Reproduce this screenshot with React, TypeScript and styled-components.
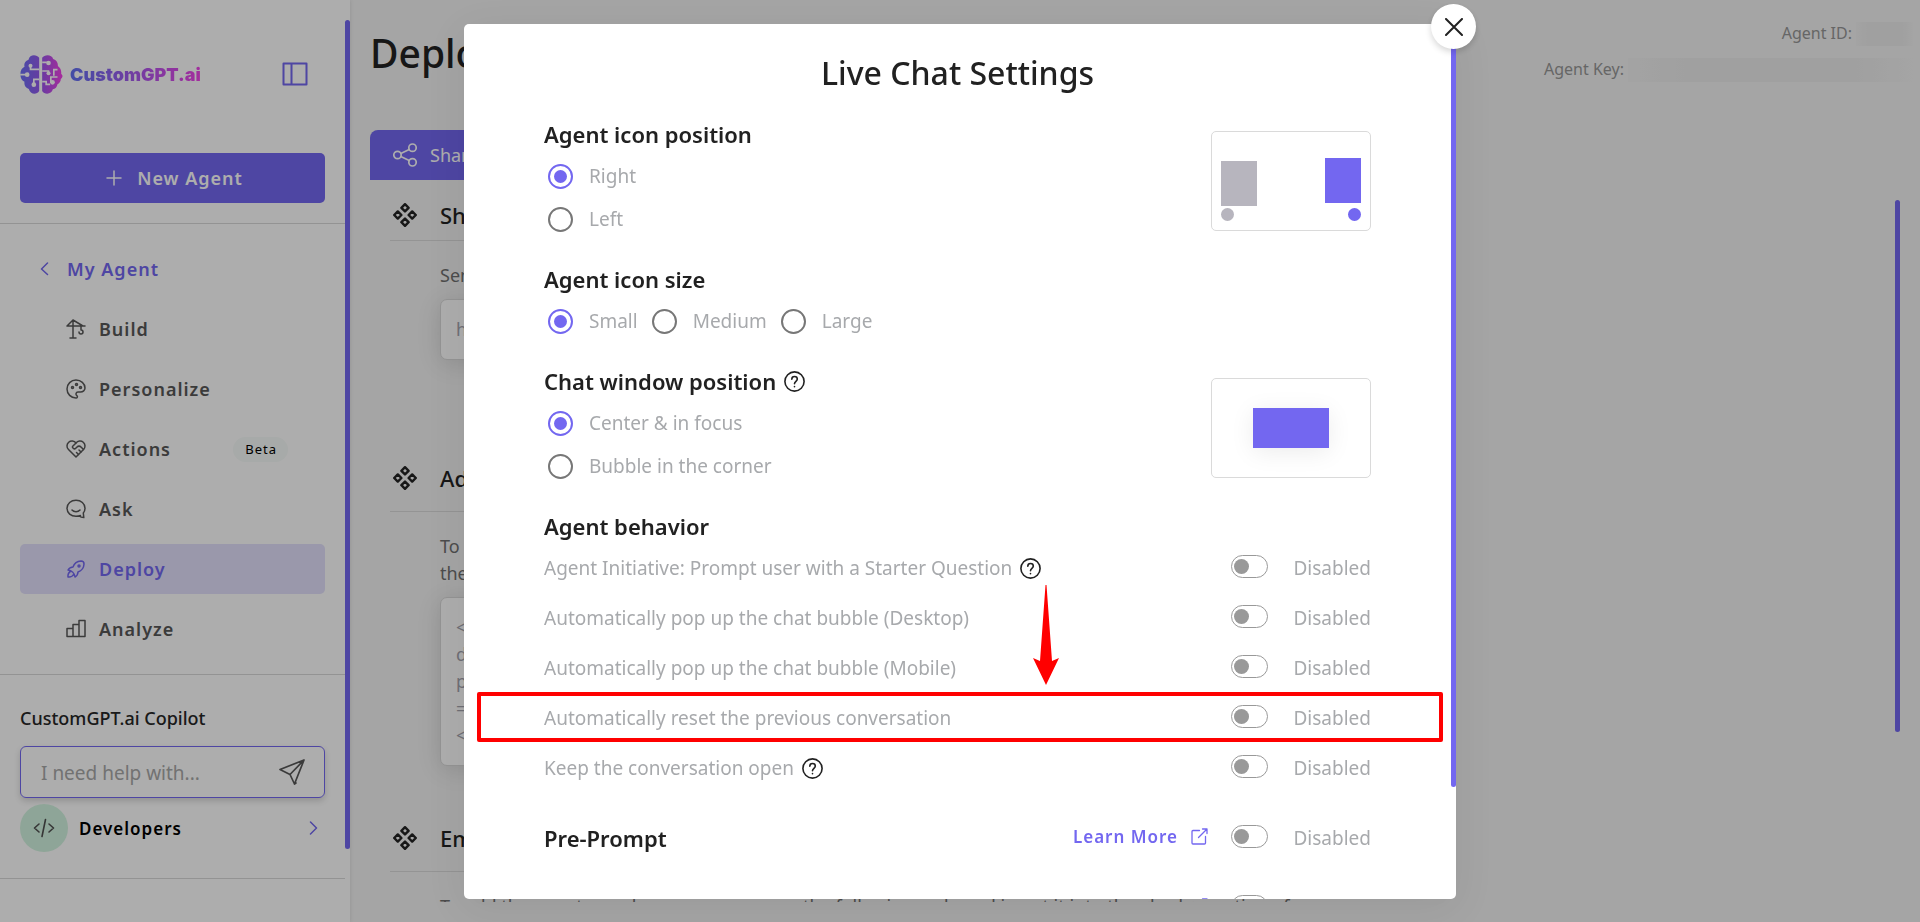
import React, { useState } from "react";
import styled, { createGlobalStyle, css } from "styled-components";

const accent = "#7367f0";

const GlobalStyle = createGlobalStyle`
  *, *::before, *::after { box-sizing: border-box; }
  body {
    margin: 0;
    overflow: hidden;
    background: #f3f3f3;
    color: #212121;
    font-family: "Noto Sans", "Open Sans", sans-serif;
    font-size: 18px;
    line-height: 27px;
  }
  button, input { font: inherit; }
  h1, h2, h3, p { margin: 0; }
`;

/* ---------- shared pieces ---------- */

const Page = styled.div`
  display: flex;
  height: 100vh;
`;

const Icon = styled.svg<{ $size?: number; $weight?: number }>`
  flex: none;
  display: block;
  width: ${(p) => p.$size ?? 24}px;
  height: ${(p) => p.$size ?? 24}px;
  fill: none;
  stroke: currentColor;
  stroke-width: ${(p) => p.$weight ?? 1.5};
  stroke-linecap: round;
  stroke-linejoin: round;
`;

const Track = styled.div`
  flex: none;
  width: 5px;
  padding: 20px 0;
`;

const Thumb = styled.div<{ $length: number }>`
  height: ${(p) => p.$length}%;
  border-radius: 3px;
  background: ${accent};
`;

/* ---------- sidebar ---------- */

const Sidebar = styled.aside`
  flex: none;
  display: flex;
  width: 350px;
  background: #fff;
  box-shadow: 0 0 4px rgba(0, 0, 0, 0.12);
`;

const SidebarBody = styled.div`
  flex: 1;
  min-width: 0;
  overflow: hidden;
`;

const SidebarBlock = styled.div`
  display: flex;
  flex-direction: column;
  padding: 20px;
  border-bottom: 1px solid #d9d9d9;
`;

const Brand = styled.div`
  display: flex;
  align-items: center;
  justify-content: space-between;
  height: 108px;
  margin-bottom: 25px;
  padding-right: 17px;
`;

const BrandLink = styled.a`
  display: flex;
  align-items: center;
  gap: 7px;
  text-decoration: none;
`;

const BrandName = styled.span`
  background: linear-gradient(90deg, #6272f4, #f043e8);
  background-clip: text;
  -webkit-background-clip: text;
  color: transparent;
  font-family: Inter, "Liberation Sans", sans-serif;
  font-size: 18px;
  font-weight: 900;
`;

const IconButton = styled.button`
  display: flex;
  padding: 0;
  border: 0;
  background: none;
  color: ${accent};
  cursor: pointer;
`;

const NewAgent = styled.button`
  display: flex;
  align-items: center;
  justify-content: center;
  gap: 15px;
  height: 50px;
  padding: 0 2px 0 6px;
  border: 0;
  border-radius: 5px;
  background: ${accent};
  color: #fff;
  font-weight: 600;
  letter-spacing: 1px;
  cursor: pointer;
`;

const Nav = styled.nav`
  display: flex;
  flex-direction: column;
  gap: 10px;
`;

const navText = css`
  display: flex;
  align-items: center;
  height: 50px;
  border-radius: 5px;
  font-weight: 600;
  letter-spacing: 1px;
  text-decoration: none;
`;

const NavBack = styled.a`
  ${navText}
  gap: 15px;
  padding-left: 18px;
  color: ${accent};
`;

const NavItem = styled.a<{ $active?: boolean }>`
  ${navText}
  gap: 13px;
  padding: 0 37px 0 46px;
  background: ${(p) => (p.$active ? "#e3e1fc" : "transparent")};
  color: ${(p) => (p.$active ? accent : "#585858")};
`;

const Badge = styled.span`
  margin-left: auto;
  padding: 0 11px 0 12px;
  border-radius: 13px;
  background: #f7fbf9;
  color: #000;
  font-size: 13px;
  font-weight: 400;
  line-height: 25px;
`;

const CopilotLabel = styled.label`
  margin-top: 10px;
  margin-bottom: 14px;
  color: #272727;
  font-weight: 500;
`;

const CopilotBox = styled.div`
  display: flex;
  align-items: center;
  height: 52px;
  padding: 0 19px 0 20px;
  border: 1px solid ${accent};
  border-radius: 6px;
  box-shadow: 0 3px 6px rgba(0, 0, 0, 0.16);
`;

const CopilotInput = styled.input`
  flex: 1;
  min-width: 0;
  padding: 2px 0 0;
  border: 0;
  outline: 0;
  background: none;
  font-size: 19px;
  &::placeholder { color: #a8a8a8; opacity: 1; }
`;

const SendButton = styled(IconButton)`
  color: #585858;
`;

const Developers = styled.a`
  display: flex;
  align-items: center;
  gap: 11px;
  margin-top: 6px;
  margin-bottom: 6px;
  padding-right: 5px;
  color: #000;
  font-size: 17px;
  font-weight: 600;
  letter-spacing: 1px;
  text-decoration: none;
`;

const DevBadge = styled.span`
  display: flex;
  align-items: center;
  justify-content: center;
  width: 48px;
  height: 48px;
  border-radius: 50%;
  background: #d2f4e0;
  color: #505050;
`;

const Push = styled.span`
  margin-left: auto;
  color: ${accent};
`;

/* ---------- deploy page ---------- */

const Main = styled.main`
  flex: 1;
  min-width: 0;
  display: flex;
  flex-direction: column;
  padding: 0 20px;
`;

const MainHeader = styled.header`
  display: flex;
  justify-content: space-between;
  height: 130px;
`;

const PageTitle = styled.h1`
  padding-top: 25px;
  color: #222;
  font-size: 39px;
  font-weight: 500;
  line-height: 56px;
`;

const Credentials = styled.dl`
  display: flex;
  flex-direction: column;
  align-items: flex-end;
  gap: 11px;
  margin: 21px -14px 0 0;
`;

const Credential = styled.div`
  display: flex;
  align-items: center;
  gap: 4px;
  color: #979797;
  font-size: 16px;
  line-height: 25px;
`;

const Redacted = styled.dd<{ $width: number }>`
  width: ${(p) => p.$width}px;
  height: 24px;
  margin: 0;
  background: linear-gradient(90deg, #f1f1f1, #ececec 20%, #ececec 80%, #f3f3f3);
`;

const Tabs = styled.div`
  display: flex;
  width: 70%;
`;

const Tab = styled.button`
  flex: 1;
  display: flex;
  align-items: center;
  gap: 13px;
  height: 50px;
  padding: 0 23px;
  border: 0;
  border-radius: 8px 8px 0 0;
  background: ${accent};
  color: #fff;
  text-align: left;
`;

const Scroller = styled.div`
  flex: 1;
  min-height: 0;
  display: flex;
  justify-content: space-between;
  margin-bottom: 20px;
`;

const Sections = styled.div`
  width: 70%;
  padding: 10px 20px 0;
  overflow: hidden;
`;

const Section = styled.section<{ $height: number }>`
  min-height: ${(p) => p.$height}px;
`;

const SectionHead = styled.div<{ $loose?: boolean }>`
  display: flex;
  align-items: center;
  gap: 23px;
  height: 51px;
  padding: 0 0 ${(p) => (p.$loose ? 16 : 0)}px 3px;
  border-bottom: 1px solid #dadada;
  color: #222;
`;

const SectionTitle = styled.h2`
  font-size: 22px;
  font-weight: 500;
  line-height: 30px;
`;

const SectionText = styled.p`
  margin: 21px 0 10px 50px;
  color: #707070;
`;

const CodeBox = styled.div`
  margin-left: 50px;
  padding: 16px 15px;
  border: 1px solid #dadada;
  border-radius: 7px;
  background: #fff;
  box-shadow: 0 4px 24px rgba(0, 0, 0, 0.12);
  color: #a4a4ae;
`;

/* ---------- dialog ---------- */

const Backdrop = styled.div`
  position: fixed;
  inset: 0;
  display: flex;
  justify-content: center;
  padding: 24px 0 23px;
  background: rgba(0, 0, 0, 0.32);
`;

const Dialog = styled.div`
  position: relative;
  display: flex;
  width: 992px;
  max-width: calc(100% - 64px);
  border-radius: 5px;
  background: #fff;
  box-shadow: 0 11px 15px -7px rgba(0, 0, 0, 0.02), 0 9px 46px 8px rgba(0, 0, 0, 0.06);
`;

const CloseButton = styled.button`
  position: absolute;
  top: -20px;
  right: -20px;
  display: flex;
  align-items: center;
  justify-content: center;
  width: 45px;
  height: 45px;
  padding: 0;
  border: 0;
  border-radius: 50%;
  background: #fff;
  box-shadow: 0 3px 6px rgba(0, 0, 0, 0.16);
  color: #212121;
  cursor: pointer;
`;

const DialogBody = styled.div`
  flex: 1;
  min-width: 0;
  padding: 25px 80px 0;
  overflow: hidden;
`;

const DialogTitle = styled.h2`
  margin-bottom: 24px;
  font-size: 32px;
  font-weight: 500;
  line-height: 48px;
  text-align: center;
`;

const Group = styled.fieldset`
  display: flex;
  align-items: flex-start;
  justify-content: space-between;
  min-width: 0;
  margin: 0 0 25px;
  padding: 0;
  border: 0;
`;

const GroupTitle = styled.h3`
  display: flex;
  align-items: center;
  gap: 8px;
  margin-bottom: 8px;
  font-size: 22px;
  font-weight: 600;
  line-height: 26px;
`;

const Choices = styled.div<{ $inline?: boolean }>`
  display: flex;
  flex-direction: ${(p) => (p.$inline ? "row" : "column")};
  column-gap: 14px;
  padding-left: 4px;
`;

const Choice = styled.label`
  display: flex;
  align-items: center;
  gap: 16px;
  height: 43px;
  color: #a7a9ac;
  font-size: 19px;
  cursor: pointer;
`;

const Radio = styled.input.attrs({ type: "radio" })`
  appearance: none;
  flex: none;
  display: grid;
  place-items: center;
  width: 25px;
  height: 25px;
  margin: 0;
  border: 2px solid #777;
  border-radius: 50%;
  &:checked { border-color: ${accent}; }
  &:checked::before {
    content: "";
    width: 13px;
    height: 13px;
    border-radius: 50%;
    background: ${accent};
  }
`;

const Preview = styled.div`
  flex: none;
  display: flex;
  width: 160px;
  height: 100px;
  margin-top: 10px;
  padding: 9px;
  border: 1px solid #dadada;
  border-radius: 5px;
`;

const PositionPreview = styled(Preview)`
  align-items: flex-end;
  justify-content: space-between;
`;

const FocusPreview = styled(Preview)`
  align-items: center;
  justify-content: center;
`;

const MiniChat = styled.span<{ $color: string; $end?: boolean }>`
  display: flex;
  flex-direction: column;
  align-items: ${(p) => (p.$end ? "flex-end" : "flex-start")};
  gap: ${(p) => (p.$end ? 5 : 2)}px;
  &::before {
    content: "";
    width: 36px;
    height: 45px;
    background: ${(p) => p.$color};
  }
  &::after {
    content: "";
    width: 13px;
    height: 13px;
    border-radius: 50%;
    background: ${(p) => p.$color};
  }
`;

const MiniWindow = styled.span`
  width: 76px;
  height: 40px;
  background: ${accent};
  box-shadow: 0 4px 24px rgba(0, 0, 0, 0.08);
`;

const Settings = styled.div`
  display: flex;
  flex-direction: column;
  gap: 26px;
  margin-top: 15px;
`;

const Setting = styled.div<{ $spaced?: boolean }>`
  position: relative;
  display: flex;
  align-items: center;
  height: 24px;
  margin-top: ${(p) => (p.$spaced ? 20 : 0)}px;
  color: #a7a9ac;
  font-size: 19px;
`;

const SettingName = styled.span`
  display: flex;
  align-items: center;
  gap: 8px;
  padding-top: 4px;
`;

const SettingTitle = styled.h3`
  padding-top: 4px;
  color: #212121;
  font-size: 22px;
  font-weight: 600;
`;

const Actions = styled.div`
  display: flex;
  align-items: center;
  gap: 23px;
  margin-left: auto;
`;

const LearnMore = styled.a`
  display: flex;
  align-items: center;
  gap: 13px;
  color: ${accent};
  font-size: 17px;
  font-weight: 600;
  letter-spacing: 1px;
  text-decoration: none;
`;

const SwitchLabel = styled.label`
  display: flex;
  align-items: center;
  justify-content: space-between;
  width: 140px;
  cursor: pointer;
`;

const SwitchState = styled.span`
  padding-top: 4px;
`;

const Switch = styled.input.attrs({ type: "checkbox" })`
  appearance: none;
  flex: none;
  display: flex;
  align-items: center;
  width: 37px;
  height: 23px;
  margin: 0;
  padding: 0 2px;
  border: 1px solid #999;
  border-radius: 12px;
  &::before {
    content: "";
    width: 15px;
    height: 15px;
    border-radius: 50%;
    background: #999;
  }
  &:checked { justify-content: flex-end; border-color: ${accent}; }
  &:checked::before { background: ${accent}; }
`;

const HelpMark = styled(Icon)`
  color: #212121;
`;

/* Red call-out drawn over one of the rows. */
const Callout = styled.span`
  position: absolute;
  inset: -12px -72px -14px -67px;
  border: 4px solid #f00;
  border-radius: 2px;
  pointer-events: none;
`;

const CalloutArrow = styled.svg`
  position: absolute;
  left: 489px;
  bottom: 43px;
  width: 26px;
  height: 100px;
  fill: #f00;
`;

/* ---------- drawings ---------- */

const BrainLogo = () => (
  <svg width="43" height="39" viewBox="0 0 128 117" aria-hidden="true">
    <defs>
      <linearGradient id="brain" gradientUnits="userSpaceOnUse" x1="0" y1="0" x2="128" y2="0">
        <stop offset="0" stopColor="#6a70f6" />
        <stop offset="0.5" stopColor="#9a58ee" />
        <stop offset="1" stopColor="#f83fe6" />
      </linearGradient>
    </defs>
    <path
      fill="url(#brain)"
      d="M57 8C50-2 28-3 25 14C14 18 11 26 13 35C4 40 0 48 1 58C0 68 5 76 13 80C11 90 16 99 26 102C30 119 50 120 57 108ZM66 8C73-2 95-3 99 12C110 16 114 24 113 33C122 40 124 48 123 56C129 61 128 67 122 72C122 80 117 85 112 88C111 96 105 102 98 103C94 119 73 120 66 108Z"
    />
    <g stroke="#fff" strokeWidth="5" fill="none">
      <path d="M31 32V43H57M0 59H18M57 73H41V87M66 22H80M66 48H85V52M112 44H101V62M66 80H78V88H90M92 83V66H112" />
    </g>
    <g fill="#fff">
      <circle cx="31" cy="32" r="6" />
      <circle cx="21" cy="59" r="7" />
      <circle cx="41" cy="89" r="7" />
      <circle cx="85" cy="24" r="7" />
      <circle cx="85" cy="55" r="6" />
      <circle cx="97" cy="82" r="7" />
    </g>
  </svg>
);

const PanelIcon = () => (
  <Icon $size={26} $weight={2} viewBox="0 0 26 26">
    <path d="M1.5 2.500H24.500V23.500H1.500ZM9.500 2.500V23.500" />
  </Icon>
);

const CraneIcon = () => (
  <Icon $size={20} viewBox="2 2 20 20">
    <path d="M6 21h6M9 21V3L3 9h18M9 3l10 6M17 9v4a2 2 0 1 1-2 2" />
  </Icon>
);

const PaletteIcon = () => (
  <Icon $size={20} viewBox="2 2 20 20">
    <path d="M12 21a9 9 0 0 1 0-18c4.970 0 9 3.582 9 8c0 1.060-.474 2.078-1.318 2.828c-.844.750-1.989 1.172-3.182 1.172h-2.500a2 2 0 0 0-1 3.750a1.300 1.300 0 0 1-1 2.250" />
    <circle cx="8.500" cy="10.500" r="1" />
    <circle cx="12.500" cy="7.500" r="1" />
    <circle cx="16.500" cy="10.500" r="1" />
  </Icon>
);

const HandshakeIcon = () => (
  <Icon $size={20} viewBox="2 2 20 20">
    <path d="M19.500 12.572L12 20l-7.500-7.428A5 5 0 1 1 12 6.006a5 5 0 1 1 7.500 6.572" />
    <path d="M12 6L8.707 9.293a1 1 0 0 0 0 1.414l.543.543c.690.690 1.810.690 2.500 0l1-1a3.182 3.182 0 0 1 4.500 0l2.250 2.250M12.500 15.500l2 2M15 13l2 2" />
  </Icon>
);

const AskIcon = () => (
  <Icon $size={20} viewBox="0 0 20 20">
    <path d="M14.500 16.500C13.200 17.100 11.700 17.300 10 17.300C5 17.300 1 14 1 9.300S5 1.200 10 1.200S19 4.600 19 9.300C19 11.300 18.400 12.800 17.300 14L17.800 18.600C16 18.600 14.500 18.200 13.200 17M6 11C8 13.300 12 13.300 14 11" />
  </Icon>
);

const RocketIcon = () => (
  <Icon $size={20} viewBox="2 2 20 20">
    <path d="M4 13a8 8 0 0 1 7 7a6 6 0 0 0 3-5a9 9 0 0 0 6-8a3 3 0 0 0-3-3a9 9 0 0 0-8 6a6 6 0 0 0-5 3M7 14a6 6 0 0 0-3 6a6 6 0 0 0 6-3" />
    <circle cx="15" cy="9" r="1" />
  </Icon>
);

const BarsIcon = () => (
  <Icon $size={20} viewBox="0 0 20 20">
    <path d="M1 17.500V9.500H7V17.500ZM7 17.500V5.500H13V17.500M13 5.500V1.500H19V17.500H7" />
  </Icon>
);

const Chevron = ({ left }: { left?: boolean }) => (
  <Icon $size={14} viewBox="0 0 14 14">
    <path d={left ? "M9.500 1L3.500 7L9.500 12.500" : "M4.500 1L10.500 7L4.500 13"} />
  </Icon>
);

const SendIcon = () => (
  <Icon $size={26} $weight={1.7} viewBox="0 0 26 26">
    <path d="M25 1L1 10.500L11 15.500L15.500 25ZM11 15.500L25 1M15.500 25L17 24" />
  </Icon>
);

const CodeIcon = () => (
  <Icon $size={22} $weight={1.6} viewBox="0 0 22 22">
    <path d="M6 7L1.500 11L6 15M16 7L20.500 11L16 15M12.500 2.500L9 19.500" />
  </Icon>
);

const ShareIcon = () => (
  <Icon $size={24} $weight={1.7} viewBox="0 0 24 24">
    <circle cx="4.500" cy="12" r="3.700" />
    <circle cx="19.500" cy="4.700" r="3.700" />
    <circle cx="19.500" cy="19.300" r="3.700" />
    <path d="M7.800 10.400L16.200 6.400M7.800 13.600L16.200 17.600" />
  </Icon>
);

const ComponentsIcon = () => (
  <Icon $size={24} $weight={2} viewBox="2 2 20 20">
    <path d="M3 12l3 3l3-3l-3-3zM15 12l3 3l3-3l-3-3zM9 6l3 3l3-3l-3-3zM9 18l3 3l3-3l-3-3z" />
  </Icon>
);

const HelpIcon = () => (
  <HelpMark $size={21} $weight={1.6} viewBox="0 0 21 21" role="img" aria-label="Help">
    <circle cx="10.500" cy="10.500" r="9.600" />
    <path d="M7.800 8.200C7.800 4.600 13.300 4.700 13.300 8.100C13.300 10.200 10.500 10.400 10.500 12.700M10.500 15.600V15.700" />
  </HelpMark>
);

const ExternalIcon = () => (
  <Icon $size={17} $weight={1.3} viewBox="0 0 17 17">
    <path d="M8.500 2.500H2C1.300 2.500 1 2.800 1 3.500V15C1 15.700 1.300 16 2 16H13.500C14.200 16 14.500 15.700 14.500 15V8.500M11.500 1H16V5.500M16 1L7.500 9.500" />
  </Icon>
);

/* ---------- app ---------- */

const navItems = [
  { label: "Build", icon: <CraneIcon /> },
  { label: "Personalize", icon: <PaletteIcon /> },
  { label: "Actions", icon: <HandshakeIcon />, badge: "Beta" },
  { label: "Ask", icon: <AskIcon /> },
  { label: "Deploy", icon: <RocketIcon />, active: true },
  { label: "Analyze", icon: <BarsIcon /> },
];

const behaviors = [
  { label: "Agent Initiative: Prompt user with a Starter Question", help: true },
  { label: "Automatically pop up the chat bubble (Desktop)" },
  { label: "Automatically pop up the chat bubble (Mobile)" },
  { label: "Automatically reset the previous conversation", marked: true },
  { label: "Keep the conversation open", help: true },
];

function RadioSet({ name, options, inline }: { name: string; options: string[]; inline?: boolean }) {
  const [value, setValue] = useState(options[0]);
  return (
    <Choices $inline={inline}>
      {options.map((option) => (
        <Choice key={option}>
          <Radio name={name} checked={value === option} onChange={() => setValue(option)} />
          {option}
        </Choice>
      ))}
    </Choices>
  );
}

function Toggle({ name, bare }: { name: string; bare?: boolean }) {
  const [on, setOn] = useState(false);
  return (
    <SwitchLabel>
      <Switch aria-label={name} checked={on} onChange={() => setOn(!on)} />
      {!bare && <SwitchState>{on ? "Enabled" : "Disabled"}</SwitchState>}
    </SwitchLabel>
  );
}

export default function App() {
  return (
    <>
      <GlobalStyle />
      <Page>
        <Sidebar>
          <SidebarBody>
            <SidebarBlock>
              <Brand>
                <BrandLink href="#home">
                  <BrainLogo />
                  <BrandName>CustomGPT.ai</BrandName>
                </BrandLink>
                <IconButton aria-label="Collapse sidebar">
                  <PanelIcon />
                </IconButton>
              </Brand>
              <NewAgent>
                <Icon $size={16} viewBox="0 0 16 16">
                  <path d="M8 1V15M1 8H15" />
                </Icon>
                New Agent
              </NewAgent>
            </SidebarBlock>
            <SidebarBlock>
              <Nav>
                <NavBack href="#agents">
                  <Chevron left />
                  My Agent
                </NavBack>
                {navItems.map((item) => (
                  <NavItem key={item.label} href={`#${item.label.toLowerCase()}`} $active={item.active}>
                    {item.icon}
                    {item.label}
                    {item.badge && <Badge>{item.badge}</Badge>}
                  </NavItem>
                ))}
              </Nav>
            </SidebarBlock>
            <SidebarBlock>
              <CopilotLabel htmlFor="copilot">CustomGPT.ai Copilot</CopilotLabel>
              <CopilotBox>
                <CopilotInput id="copilot" placeholder="I need help with..." />
                <SendButton aria-label="Send">
                  <SendIcon />
                </SendButton>
              </CopilotBox>
              <Developers href="#developers">
                <DevBadge>
                  <CodeIcon />
                </DevBadge>
                Developers
                <Push>
                  <Chevron />
                </Push>
              </Developers>
            </SidebarBlock>
          </SidebarBody>
          <Track>
            <Thumb $length={94} />
          </Track>
        </Sidebar>

        <Main>
          <MainHeader>
            <PageTitle>Deploy</PageTitle>
            <Credentials>
              <Credential>
                <dt>Agent ID:</dt>
                <Redacted $width={58} />
              </Credential>
              <Credential>
                <dt>Agent Key:</dt>
                <Redacted $width={286} />
              </Credential>
            </Credentials>
          </MainHeader>
          <Tabs>
            <Tab>
              <ShareIcon />
              Share
            </Tab>
          </Tabs>
          <Scroller>
            <Sections>
              <Section $height={271}>
                <SectionHead>
                  <ComponentsIcon />
                  <SectionTitle>Share</SectionTitle>
                </SectionHead>
                <SectionText>Send</SectionText>
                <CodeBox>https</CodeBox>
              </Section>
              <Section $height={360}>
                <SectionHead $loose>
                  <ComponentsIcon />
                  <SectionTitle>Add</SectionTitle>
                </SectionHead>
                <SectionText>
                  To
                  <br />
                  the
                </SectionText>
                <CodeBox>
                  &lt;
                  <br />
                  d
                  <br />
                  p
                  <br />
                  =
                  <br />
                  &lt;
                </CodeBox>
              </Section>
              <Section $height={200}>
                <SectionHead $loose>
                  <ComponentsIcon />
                  <SectionTitle>Embed</SectionTitle>
                </SectionHead>
                <SectionText>
                  To add the agent anywhere on a page, use the following code and insert it into the &lt;body&gt; section of
                </SectionText>
              </Section>
            </Sections>
            <Track>
              <Thumb $length={78} />
            </Track>
          </Scroller>
        </Main>
      </Page>

      <Backdrop>
        <Dialog role="dialog" aria-modal="true" aria-labelledby="dialog-title">
          <DialogBody>
            <DialogTitle id="dialog-title">Live Chat Settings</DialogTitle>
            <Group>
              <div>
                <GroupTitle>Agent icon position</GroupTitle>
                <RadioSet name="icon-position" options={["Right", "Left"]} />
              </div>
              <PositionPreview>
                <MiniChat $color="#b7b5be" />
                <MiniChat $color={accent} $end />
              </PositionPreview>
            </Group>
            <Group>
              <div>
                <GroupTitle>Agent icon size</GroupTitle>
                <RadioSet name="icon-size" options={["Small", "Medium", "Large"]} inline />
              </div>
            </Group>
            <Group>
              <div>
                <GroupTitle>
                  Chat window position
                  <HelpIcon />
                </GroupTitle>
                <RadioSet name="window-position" options={["Center & in focus", "Bubble in the corner"]} />
              </div>
              <FocusPreview>
                <MiniWindow />
              </FocusPreview>
            </Group>
            <GroupTitle>Agent behavior</GroupTitle>
            <Settings>
              {behaviors.map((item) => (
                <Setting key={item.label}>
                  <SettingName>
                    {item.label}
                    {item.help && <HelpIcon />}
                  </SettingName>
                  <Actions>
                    <Toggle name={item.label} />
                  </Actions>
                  {item.marked && (
                    <>
                      <Callout />
                      <CalloutArrow viewBox="0 0 26 100" aria-hidden="true">
                        <path d="M12.500 0H13.500L19 76L26 73L13 100L0 73L7 76Z" />
                      </CalloutArrow>
                    </>
                  )}
                </Setting>
              ))}
              <Setting $spaced>
                <SettingTitle>Pre-Prompt</SettingTitle>
                <Actions>
                  <LearnMore href="#learn-more">
                    Learn More
                    <ExternalIcon />
                  </LearnMore>
                  <Toggle name="Pre-Prompt" />
                </Actions>
              </Setting>
              <Setting $spaced>
                <Actions>
                  <LearnMore href="#learn-more" aria-label="Learn more">
                    <ExternalIcon />
                  </LearnMore>
                  <Toggle name="Setting" bare />
                </Actions>
              </Setting>
            </Settings>
          </DialogBody>
          <Track>
            <Thumb $length={89} />
          </Track>
          <CloseButton aria-label="Close">
            <Icon $size={18} $weight={2} viewBox="0 0 18 18">
              <path d="M1 1L17 17M17 1L1 17" />
            </Icon>
          </CloseButton>
        </Dialog>
      </Backdrop>
    </>
  );
}
